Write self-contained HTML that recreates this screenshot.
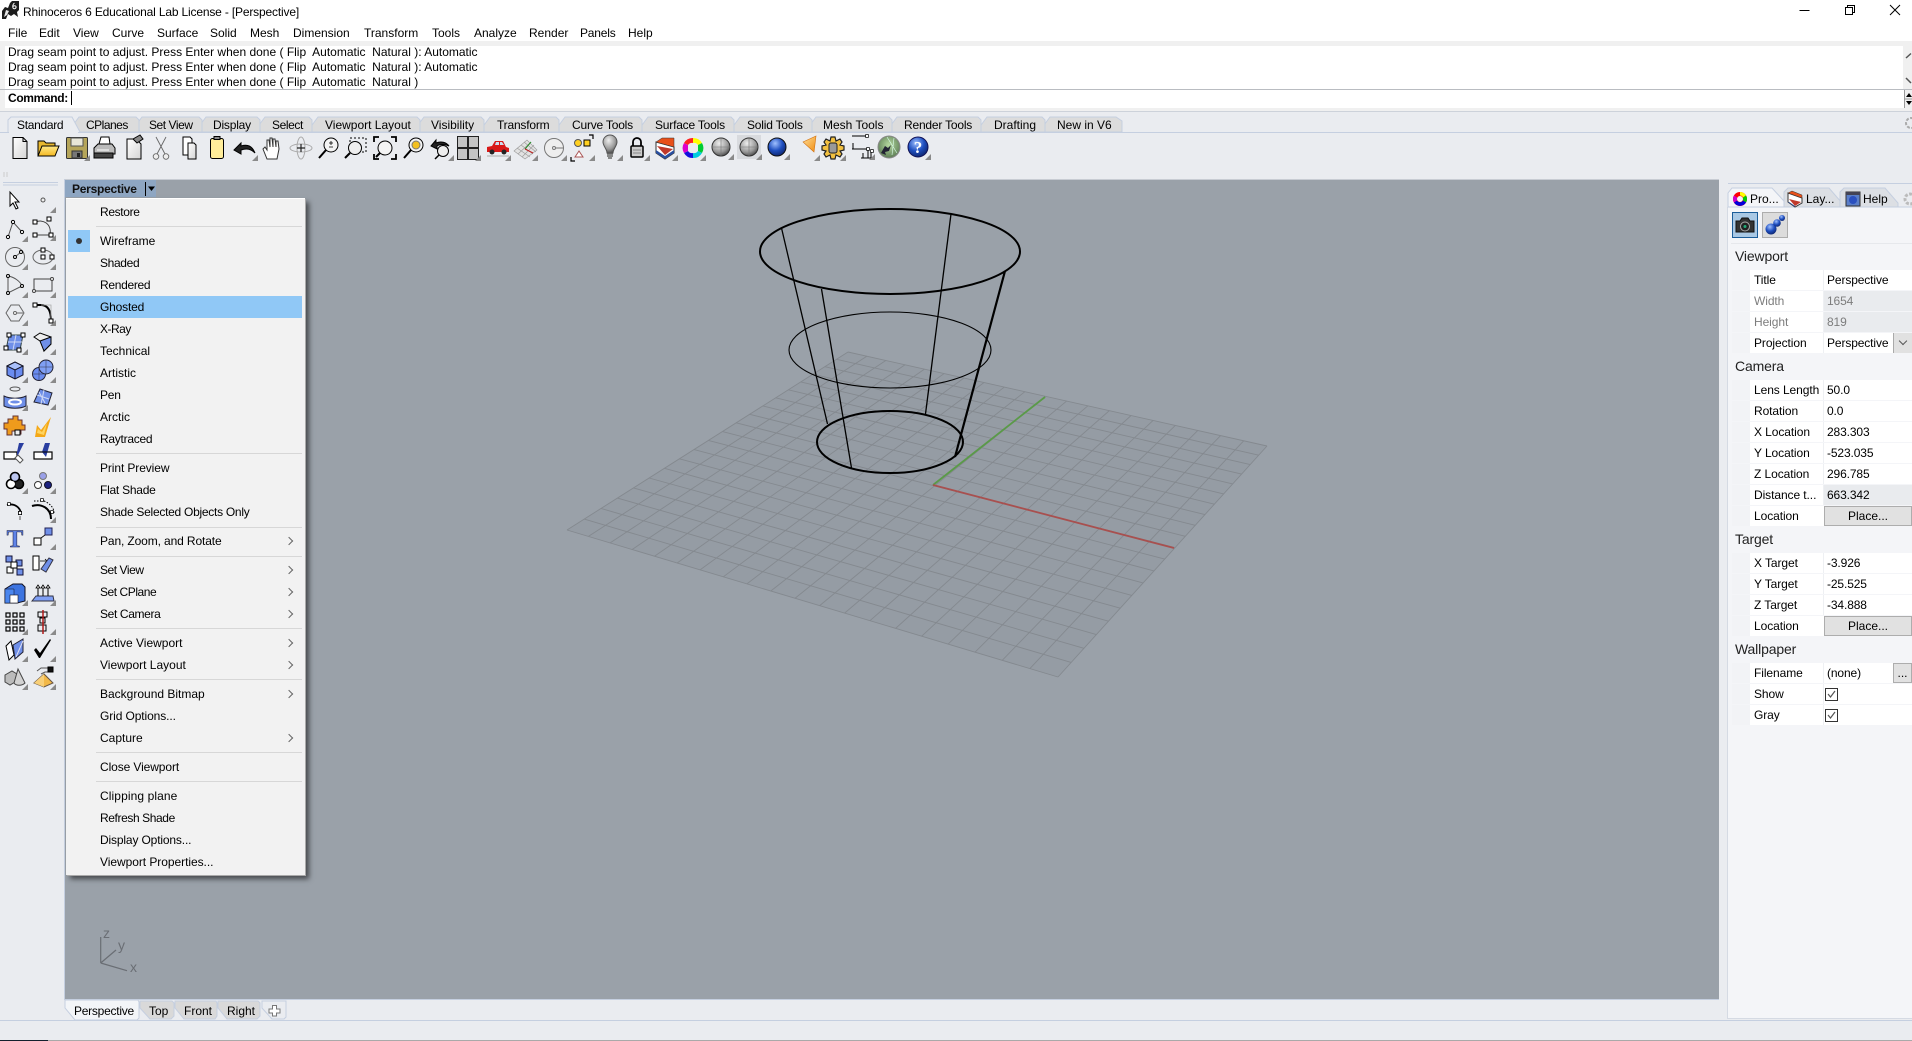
<!DOCTYPE html>
<html><head><meta charset="utf-8"><title>Rhinoceros 6</title>
<style>
html,body{margin:0;padding:0;width:1912px;height:1041px;overflow:hidden;background:#eaecf0;font:12px/16px "Liberation Sans",sans-serif;color:#000}
.b,.t{position:absolute}
.t{white-space:pre;height:16px}
.s{color:#1a1a1a}
.tb{top:117px;letter-spacing:-.2px}
#menu{position:absolute;left:66px;top:198px;width:239px;height:677px;background:#f2f2f2;box-shadow:inset 0 1px 0 #fff,1px 1px 0 #aaa,4px 4px 5px rgba(0,0,0,.55);box-sizing:border-box}
#menu .m{position:absolute;left:34px;white-space:pre;line-height:16px}
#menu hr{position:absolute;left:30px;width:206px;height:1px;margin:0;border:0;background:#d7d7d7}
#menu .a{position:absolute;left:220px;width:5px;height:5px;border-top:1px solid #666;border-right:1px solid #666;transform:rotate(45deg)}
.r{position:absolute;left:1732px;width:180px;height:20px;background:#fff}
.r i{position:absolute;left:0;top:0;width:18px;height:20px;background:#f2f3f6}
.r b{position:absolute;left:22px;top:2px;font-weight:normal;white-space:pre;letter-spacing:-.08px}
.r u{position:absolute;left:91px;top:0;width:89px;height:20px;text-decoration:none;white-space:pre;line-height:20px;padding-left:3px;box-sizing:border-box;border-left:1px solid #eef0f3;letter-spacing:-.12px}
.g{color:#7d7d7d}.gb{background:#e9ebee}
.h2{position:absolute;left:1735px;font-size:14px;line-height:18px;color:#222;letter-spacing:-.15px}
.btn{position:absolute;left:92px;top:0;width:88px;height:20px;box-sizing:border-box;background:#e1e1e1;border:1px solid #adadad;text-align:center;line-height:18px}
.chk{position:absolute;left:93px;top:4px;width:13px;height:13px;box-sizing:border-box;border:1px solid #333;background:#fff}
</style></head><body>

<!-- chrome backgrounds -->
<div class="b" style="left:0;top:0;width:1912px;height:41px;background:#fff"></div>
<div class="b" style="left:0;top:41px;width:1912px;height:5px;background:#f0f0f0"></div>
<div class="b" style="left:5px;top:46px;width:1898px;height:43px;background:#fff"></div>
<div class="b" style="left:0;top:46px;width:5px;height:62px;background:#f0f0f0"></div>
<div class="b" style="left:1903px;top:46px;width:9px;height:43px;background:#f0f0f0"></div>
<div class="b" style="left:0;top:89px;width:1912px;height:1px;background:#b9bcc1"></div>
<div class="b" style="left:5px;top:90px;width:1899px;height:18px;background:#fff"></div>
<div class="b" style="left:1904px;top:90px;width:8px;height:18px;background:#f0f0f0;border-left:1px solid #999"></div>
<div class="b" style="left:0;top:108px;width:1912px;height:3px;background:#f0f0f0"></div>
<div class="b" style="left:0;top:111px;width:1912px;height:1px;background:#cdd2da"></div>
<div class="b" style="left:0;top:132px;width:1912px;height:1px;background:#c5cfe0"></div>
<!-- viewport -->
<div class="b" style="left:64px;top:179px;width:1px;height:821px;background:#c5cfe0"></div>
<div class="b" style="left:65px;top:179px;width:1654px;height:1px;background:#c8ccd3"></div>
<div class="b" style="left:65px;top:180px;width:1654px;height:819px;background:#9aa1a9"></div>
<div class="b" style="left:65px;top:999px;width:1654px;height:1px;background:#c5cfe0"></div>
<div class="b" style="left:0;top:1020px;width:1912px;height:1px;background:#c5cfe0"></div>
<div class="b" style="left:0;top:1040px;width:48px;height:1px;background:#14202e"></div>
<div class="b" style="left:48px;top:1040px;width:1864px;height:1px;background:#a9a9a9"></div>
<!-- right panel -->
<div class="b" style="left:1728px;top:183px;width:184px;height:1px;background:#c5cfe0"></div>
<div class="b" style="left:1728px;top:207px;width:184px;height:811px;background:#f4f5f8"></div>
<div class="b" style="left:1727px;top:207px;width:1px;height:812px;background:#d5dae3"></div>
<div class="b" style="left:1728px;top:1018px;width:184px;height:1px;background:#d5dae3"></div>
<div class="b" style="left:1732px;top:212px;width:26px;height:26px;box-sizing:border-box;background:#a9c8e4;border:1px solid #1b5c98"></div>
<div class="b" style="left:1762px;top:212px;width:26px;height:26px;box-sizing:border-box;background:#dcdcdc;border:1px solid #adadad"></div>
<div class="b" style="left:1731px;top:243px;width:181px;height:1px;background:#e6e8ec"></div>
<!-- perspective label -->
<div class="b" style="left:65px;top:180px;width:91px;height:17px;background:#8ea6c2"></div>
<div class="b" style="left:145px;top:182px;width:1px;height:14px;background:#000"></div>

<svg class="b" style="left:0;top:0" width="1912" height="1041" viewBox="0 0 1912 1041" xmlns="http://www.w3.org/2000/svg">
<defs>
<linearGradient id="gp" x1="0" y1="0" x2="1" y2="1"><stop offset="0" stop-color="#fff"/><stop offset="1" stop-color="#d4d4d4"/></linearGradient>
<linearGradient id="gy" x1="0" y1="0" x2="0" y2="1"><stop offset="0" stop-color="#ffe98a"/><stop offset="1" stop-color="#f5b820"/></linearGradient>
<linearGradient id="go" x1="0" y1="0" x2="1" y2="1"><stop offset="0" stop-color="#ffdf9a"/><stop offset="1" stop-color="#f08c10"/></linearGradient>
<radialGradient id="gs" cx=".4" cy=".3" r=".8"><stop offset="0" stop-color="#eee"/><stop offset=".6" stop-color="#999"/><stop offset="1" stop-color="#333"/></radialGradient>
<radialGradient id="gb" cx=".4" cy=".3" r=".8"><stop offset="0" stop-color="#9fc0ff"/><stop offset=".5" stop-color="#1f4fc0"/><stop offset="1" stop-color="#0a1c5c"/></radialGradient>
<radialGradient id="gg" cx=".5" cy=".4" r=".7"><stop offset="0" stop-color="#b5d8a0"/><stop offset="1" stop-color="#4e6e48"/></radialGradient>
<path id="t" d="M13 7V13H7Z" fill="#8a8a8a"/>
<rect id="n" x="-2" y="-2" width="4" height="4" fill="#fff" stroke="#000"/>
</defs>

<!-- top tabs -->
<g fill="#dcdcdc" stroke="#c5cfe0">
<path d="M1039 132L1050 117H1116L1122 121V132Z"/>
<path d="M976 132L987 117H1042L1045 120V132Z"/>
<path d="M886 132L897 117H978L981 120V132Z"/>
<path d="M805 132L816 117H889L892 120V132Z"/>
<path d="M729 132L740 117H809L812 120V132Z"/>
<path d="M637 132L648 117H731L734 120V132Z"/>
<path d="M554 132L565 117H639L642 120V132Z"/>
<path d="M479 132L490 117H556L559 120V132Z"/>
<path d="M413 132L424 117H481L484 120V132Z"/>
<path d="M307 132L318 117H417L420 120V132Z"/>
<path d="M254 132L265 117H309L312 120V132Z"/>
<path d="M195 132L206 117H257L260 120V132Z"/>
<path d="M131 132L142 117H199L202 120V132Z"/>
<path d="M68 132L79 117H136L139 120V132Z"/>
</g>
<path d="M8 132V120L11 117H72L80 132" fill="#eaecf0" stroke="#c5cfe0"/>
<path d="M9 132H78" stroke="#eaecf0" stroke-width="2"/>

<!-- window controls -->
<path d="M1799.500 10.500H1809.500" stroke="#000"/>
<path d="M1845.500 7.500H1852.500V14.500H1845.500ZM1847.500 7.500V5.500H1854.500V12.500H1852.500" fill="none" stroke="#000"/>
<path d="M1890 5L1900 15M1900 5L1890 15" stroke="#000"/>
<path d="M1906 58L1911 53.500M1906 78L1911 83" stroke="#555" stroke-width="1.500" fill="none"/>
<path d="M1909 93L1906 97H1912ZM1909 105L1906 101H1912Z" fill="#000"/>
<path d="M1905 99H1912" stroke="#999"/>
<circle cx="1911" cy="123" r="5" fill="none" stroke="#aaa" stroke-width="2" stroke-dasharray="3 1.500"/>

<!-- app icon -->
<path d="M2 19L2 11L5 7L8 8L10 3L12 1H19V10L17 12L18 17L14 14L11 16L8 14L6 19Z" fill="#1c1c1c"/>
<path d="M4 17L6 10L9 11L7 15Z" fill="#e8e8e8"/>
<path d="M14.500 3C13 4 12.500 6 13 8C14 9.500 16.500 8.500 16 6.500C15.500 5.500 14 5.500 13.200 6.500" fill="none" stroke="#fff"/>

<!-- ===== viewport content ===== -->
<g id="grid"><path d="M567 530L848 352L1267 446L1058 677Z" fill="#959ca4"/></g>
<path d="M933 485L1045 397" stroke="#5a9a48" stroke-width="1.800"/>
<path d="M933 485L1174 548" stroke="#a8504f" stroke-width="1.800"/>
<g fill="none" stroke="#000">
<ellipse cx="890" cy="251.500" rx="130" ry="42.500" stroke-width="2"/>
<ellipse cx="890" cy="350" rx="101" ry="38" stroke-width="1.100"/>
<ellipse cx="890" cy="442" rx="73" ry="31" stroke-width="2"/>
<path d="M781.500 228L827.500 424" stroke-width="1.300"/>
<path d="M821.500 289L851.500 468" stroke-width="1.300"/>
<path d="M951 214L925.500 414" stroke-width="1.300"/>
<path d="M1005 271L955 457" stroke-width="2.200"/>
</g>
<!-- axis widget -->
<g stroke="#6a6e74" stroke-width="1.200" fill="none"><path d="M100.700 963V937M100.700 963L116 950M100.700 963L127 970.700"/></g>
<g font-family="Liberation Sans" font-size="14" fill="#6a6e74"><text x="103" y="938">z</text><text x="118" y="950">y</text><text x="130" y="972">x</text></g>
<path d="M148 186.500L155 186.500L151.500 191Z" fill="#000"/>

<!-- bottom tabs -->
<path d="M65 1000V1008L75 1020H137L139 1018V1002L138 1000Z" fill="#f3f5f8" stroke="#c5cfe0"/>
<g fill="#d9d9d9" stroke="#c5cfe0">
<path d="M140 1001H172L174 1003V1016L171 1019H150L140 1008Z"/>
<path d="M175 1001H216L217 1003V1016L215 1019H184L175 1008Z"/>
<path d="M218 1001H258L260 1003V1016L257 1019H227L218 1008Z"/>
</g>
<path d="M262 1001H286V1017L284 1019H272L262 1008Z" fill="#eaecf0" stroke="#c5cfe0"/>
<path d="M272.500 1006.500H276.500V1010H280V1014H276.500V1017H272.500V1014H269V1010H272.500Z" transform="translate(0,-1)" fill="#fff" stroke="#777"/>

<!-- panel tabs -->
<path d="M1728 207V193L1732 188H1772L1783 200L1788 207Z" fill="#f4f5f8" stroke="#c5cfe0"/>
<path d="M1784 207L1784 192L1788 188H1829L1842 203V207Z" fill="#dcdfe4" stroke="#c5cfe0"/>
<path d="M1840 207V192L1844 188H1885L1898 203V207Z" fill="#dcdfe4" stroke="#c5cfe0"/>
<path d="M1728 207H1912" stroke="#c5cfe0"/>
<g transform="translate(1740,199)"><circle r="5" fill="none" stroke="#f00" stroke-width="4"/><path d="M0-7A7 7 0 0 1 6-3.500L3-1.500A3.500 3.500 0 0 0 0-3.500Z" fill="#ff0"/><path d="M6-3.500A7 7 0 0 1 6 3.500L3 1.500V-1.500Z" fill="#0c0"/><path d="M6 3.500A7 7 0 0 1-6 3.500L-3 1.500A3.500 3.500 0 0 0 3 1.500Z" fill="#00d"/><path d="M-6 3.500A7 7 0 0 1-6-3.500L-3-1.500V1.500Z" fill="#c0c"/></g>
<g transform="translate(1795,199)"><path d="M-7-6L7-1V4L0 8L-7 3Z" fill="#fff" stroke="#333"/><path d="M-7-6L7-1V-4L-3-8Z" fill="#e8501a" stroke="#333" stroke-width=".5"/><path d="M-6 0L6 3L0 7Z" fill="#c0392b"/><path d="M-6 3L0 7V8L-7 3Z" fill="#2a4fa0"/></g>
<g transform="translate(1853,199)"><rect x="-7" y="-7" width="14" height="14" fill="#5a7ec8" stroke="#333"/><rect x="-7" y="-7" width="14" height="3" fill="#445"/><circle cy="1" r="4" fill="#2a50c0"/></g>
<circle cx="1910" cy="199" r="5" fill="none" stroke="#bbb" stroke-width="3" stroke-dasharray="3 1.500"/>
<!-- camera -->
<g transform="translate(1745,225)"><path d="M-9-4H-5L-3-7H3L5-4H9V7H-9Z" fill="#333" stroke="#111"/><circle r="4.500" cy="1.500" fill="#222" stroke="#aaa"/><circle r="1.500" cy="1.500" fill="#2a7"/></g>
<g transform="translate(1775,225)"><circle cx="-4" cy="4" r="5.500" fill="url(#gb)"/><circle cx="2" cy="-2" r="3.800" fill="url(#gb)"/><circle cx="7" cy="-7" r="3" fill="url(#gb)"/></g>

<!-- ===== top toolbar icons ===== -->
<g stroke="#000" stroke-width="1" fill="none">
<g transform="translate(20,148)"><path d="M-7-10.500H3L7-6.500V10.500H-7Z" fill="url(#gp)"/><path d="M3-10.500V-6.500H7"/></g>
<g transform="translate(48,148)"><path d="M-10 8V-7H-4L-2-5H7V-2" fill="#e8b830"/><path d="M-10 8L-6-2H11L7 8Z" fill="url(#gy)"/></g>
<g transform="translate(77,148)"><rect x="-10.500" y="-10.500" width="21" height="21" rx="1" fill="#b5a55a" stroke="#333"/><rect x="-6" y="-10" width="12" height="8" fill="#e8e6d8" stroke="#555"/><rect x="-5" y="3" width="10" height="7" fill="#777" stroke="#333"/><rect x="0" y="5" width="3" height="4" fill="#222" stroke="none"/><use href="#t" stroke="none"/></g>
<g transform="translate(104,148)"><path d="M-5-4L-3-11H5L6-4Z" fill="#fff"/><path d="M-10 0L-6-4H8L11 0V6H-10Z" fill="#bbb"/><rect x="-10" y="5" width="19" height="5" fill="#444"/><path d="M-7 2H5" stroke="#fff"/></g>
<g transform="translate(134,148)"><path d="M-7-9H2L7-4V11H-7Z" fill="url(#gp)"/><path d="M-1-9L6-13L9-9L3-5Z" fill="#888"/></g>
<g transform="translate(161,148)" stroke="#666" stroke-width=".9"><path d="M-5-11L4 6M5-11L-4 6"/><circle cx="-5" cy="8.500" r="2.800" fill="#eee"/><circle cx="5" cy="8.500" r="2.800" fill="#eee"/></g>
<g transform="translate(189,148)"><path d="M-6-11H1L3-9V7H-6Z" fill="#fff"/><path d="M-1-5H5L7-3V11H-1Z" fill="url(#gp)"/></g>
<g transform="translate(217,148)"><rect x="-6.500" y="-9.500" width="13" height="20" rx="2" fill="#ffed9a"/><rect x="-3" y="-11.500" width="6" height="3" fill="#888"/></g>
<g transform="translate(245,148)"><path d="M-11 2L-4-5V-2C3-4 7-2 10 5C6 1 2 0-4 2V6Z" fill="#222"/><use href="#t" stroke="none"/></g>
<g transform="translate(272,148)" stroke="#333"><path d="M-5 11L-9 1L-7-1L-5 2V-8L-3-8L-2-1V-10L0-10L1-1V-9L3-9L4-1V-7L6-7L7 1L5 11Z" fill="#fff"/></g>
<g transform="translate(301,148)"><ellipse rx="11" ry="4" stroke="#aaa"/><ellipse rx="4" ry="11" stroke="#aaa"/><path d="M-4 0H4M0-4V4" stroke="#222" stroke-width="1.200"/></g>
<g transform="translate(329,148)"><circle cx="2" cy="-3" r="7" fill="#f4f4f4"/><path d="M-3 2L-10 10" stroke-width="2"/><path d="M0-5H4M2-7V-3M0-1H4" stroke-width=".8"/></g>
<g transform="translate(356,148)"><rect x="-6" y="-10" width="16" height="14" stroke-dasharray="2 2"/><circle cx="-1" cy="0" r="6.500" fill="#eee"/><path d="M-6 5L-11 10" stroke-width="2"/></g>
<g transform="translate(385,148)"><circle r="7" fill="#f4f4f4"/><path d="M-5 5L-9 9" stroke-width="2"/><path d="M-11-6V-11H-6M6-11H11V-6M11 6V11H6M-6 11H-11V6" stroke-width="1.800"/></g>
<g transform="translate(414,148)"><circle cx="2" cy="-3" r="7" fill="#f4f4f4"/><circle cx="2" cy="-3" r="4" fill="#f3c020" stroke="#777"/><path d="M-3 2L-10 10" stroke-width="2"/></g>
<g transform="translate(441,148)"><path d="M-10-2L-5-8V-5C0-7 5-6 8-2C4-4-1-4-4-2V1Z" fill="#222"/><circle cx="2" cy="3" r="5.500" fill="#eee"/><path d="M-2 7L-6 11" stroke-width="1.500"/><use href="#t" stroke="none"/></g>
<g transform="translate(468,148)"><rect x="-10.500" y="-11.500" width="21" height="23" fill="#c4c4c4" stroke="#222"/><path d="M0-11V11M-10 0H10" stroke-width="2" stroke="#222"/><use href="#t" stroke="none"/></g>
<g transform="translate(498,148)" stroke="none"><path d="M-11 2V-1L-6-2L-3-7H5L8-1L11 0V4H-11Z" fill="#d81818"/><path d="M-2-6H1V-3H-3ZM2-6H4L6-3H2Z" fill="#cde"/><circle cx="-6" cy="4" r="2.500" fill="#222"/><circle cx="6" cy="4" r="2.500" fill="#222"/><path d="M-11 8H11" stroke="#aaa"/><use href="#t"/></g>
<g transform="translate(525,148)" stroke="#999" stroke-width=".6"><path d="M-11 3L2-8L12 2L0 11Z" fill="#e2e2e2"/><path d="M-8 0L5 9M-4-3L8 6M-1-6L11 4M-7 6L6-6M-3 9L9-3"/><path d="M0 1L6-6" stroke="#2a8a2a" stroke-width="1"/><path d="M0 1L8 5" stroke="#c02020" stroke-width="1"/><use href="#t" stroke="none"/></g>
<g transform="translate(554,148)" stroke="#777"><circle r="9.500" fill="#eee"/><circle r="1.500"/><path d="M1.500 0H9"/><use href="#t" stroke="none"/></g>
<g transform="translate(582,148)"><circle cx="-4" cy="-5" r="3.500" fill="#ffd020" stroke="#555"/><rect x="2" y="-8" width="6" height="6" fill="#ffd020"/><path d="M-3 3L1 9H-7Z" fill="#fff" stroke="#a55"/><path d="M7-13H11V-9M-11 9V13H-7" stroke-width="1.200"/><use href="#t" stroke="none"/></g>
<g transform="translate(610,148)" stroke="#555"><path d="M-3 5C-3 1-7-2-7-6A7 7 0 0 1 7-6C7-2 3 1 3 5Z" fill="url(#gs)"/><path d="M-3 6H3M-3 8H3M-2 10H2" stroke="#666" stroke-width="1.500"/><use href="#t" stroke="none"/></g>
<g transform="translate(637,148)"><rect x="-6" y="-2" width="12" height="11" rx="1" fill="#ccc" stroke-width="1.500"/><path d="M-4-2V-6A4 4 0 0 1 4-6V-2" stroke-width="1.800"/><path d="M-4 2H4M-4 5H4" stroke="#888"/><use href="#t" stroke="none"/></g>
<g transform="translate(665,148)"><path d="M-9-6L9-1V5L0 11L-9 5Z" fill="#fff" stroke="#333"/><path d="M-9-6L9-1V-10L-3-10Z" fill="#e8501a" stroke="#333" stroke-width=".5"/><path d="M-8-2L8 1L0 7Z" fill="#c0392b" stroke="none"/><path d="M-9 2L0 8L9 2V5L0 11L-9 5Z" fill="#2a4fa0" stroke="none"/><use href="#t" stroke="none"/></g>
<g transform="translate(693,148)" stroke="none"><path d="M0-10A10 10 0 0 1 9-5L5-3A5 5 0 0 0 0-5Z" fill="#ff0"/><path d="M9-5A10 10 0 0 1 9 5L5 3V-3Z" fill="#0c3"/><path d="M9 5A10 10 0 0 1 0 10V5A5 5 0 0 0 5 3Z" fill="#0cd"/><path d="M0 10A10 10 0 0 1-9 5L-5 3A5 5 0 0 0 0 5Z" fill="#11d"/><path d="M-9 5A10 10 0 0 1-9-5L-5-3V3Z" fill="#d0c"/><path d="M-9-5A10 10 0 0 1 0-10V-5A5 5 0 0 0-5-3Z" fill="#f22"/><use href="#t"/></g>
<g transform="translate(721,147)"><circle r="9" fill="url(#gs)" stroke="#333"/><path d="M-9 0H9M0-9V9" stroke="#777" stroke-width=".6"/><use href="#t" stroke="none"/></g>
<g transform="translate(749,147)"><rect x="-12" y="-12" width="24" height="24" fill="#d8dade" stroke="none"/><circle r="9" fill="url(#gs)" stroke="#333"/><path d="M-9 0H9M0-9V9" stroke="#777" stroke-width=".6"/><use href="#t" stroke="none"/></g>
<g transform="translate(777,147)"><circle r="9" fill="url(#gb)" stroke="#111"/><use href="#t" stroke="none"/></g>
<g transform="translate(809,146)"><path d="M-6-4L7-10L5 6Z" fill="url(#go)" stroke="#d07010" stroke-width=".6"/><use href="#t" stroke="none" transform="translate(-2,2)"/></g>
<g transform="translate(833,148)"><path d="M-2-11H2L3-7L7-9L9-6L7-3L11-2V2L7 3L9 6L7 9L3 7L2 11H-2L-3 7L-7 9L-9 6L-7 3L-11 2V-2L-7-3L-9-6L-7-9L-3-7Z" fill="#f2c040" stroke="#222" stroke-width="1.200"/><rect x="-4" y="-5" width="8" height="10" rx="2" fill="#999" stroke="#222"/><use href="#t" stroke="none"/></g>
<g transform="translate(862,147)" stroke-width="1"><path d="M-10-11H4M-9-4V2M-10 2H6M6 2V11M-1 11H1M1 6V11H9V4" /><use href="#n" transform="translate(5,-11) scale(.7)"/><use href="#n" transform="translate(6,2) scale(.7)"/><use href="#n" transform="translate(10,4) scale(.7)"/><use href="#t" stroke="none"/></g>
<g transform="translate(889,147)"><circle r="11" fill="url(#gg)" stroke="#888"/><path d="M-8 6L-4-1L-1 1L2-2L0 4L-4 5L-3 8Z" fill="#223" stroke="none"/><path d="M-2-10L8 6M5-9L3 8" stroke="#dfe" stroke-width=".6"/></g>
<g transform="translate(918,147)"><circle r="10" fill="url(#gb)" stroke="#115"/><text x="0" y="6" text-anchor="middle" font-family="Liberation Serif" font-weight="bold" font-size="17" fill="#fff" stroke="none">?</text><use href="#t" stroke="none"/></g>

<!-- ===== left toolbar ===== -->
<path d="M3 182.500H58M3 185H58" stroke="#c5cfe0" stroke-width="1"/>
<path d="M4 172V177M7 172V177" stroke="#ccc"/>
<g transform="translate(15,200)"><path d="M-5-8V6L-2 3L1 9L3 8L0 2H4Z" fill="#fff"/></g>
<g transform="translate(43,200)"><circle r="2" fill="#eee" stroke="#555"/><use href="#t" stroke="none"/></g>
<g transform="translate(15,229)" stroke="#555"><path d="M-7 8L-2-7L7 3"/><g fill="#fff" stroke="#000"><circle cx="-7" cy="8" r="1.600"/><circle cx="-2" cy="-7" r="1.600"/><circle cx="7" cy="3" r="1.600"/></g><use href="#t" stroke="none"/></g>
<g transform="translate(43,228)" stroke="#444"><path d="M-7-6C-1-9 9-5 7 7H-7"/><use href="#n" transform="translate(-8,-6)"/><use href="#n" transform="translate(6,-9)"/><use href="#n" transform="translate(-8,7)"/><use href="#n" transform="translate(8,7)"/><use href="#t" stroke="none"/></g>
<g transform="translate(15,257)" stroke="#666"><circle r="9.500"/><path d="M0 0L6-5"/><circle r="1.500" fill="#fff" stroke="#000"/><circle cx="6" cy="-5" r="1.500" fill="#fff" stroke="#000"/><use href="#t" stroke="none"/></g>
<g transform="translate(43,257)" stroke="#666"><ellipse rx="10" ry="7"/><use href="#n" transform="translate(0,-7)"/><use href="#n"/><use href="#n" transform="translate(9,0)"/><use href="#t" stroke="none"/></g>
<g transform="translate(15,285)" stroke="#555"><path d="M-7 8V-9C-1-8 5-4 7 1Z"/><g fill="#fff" stroke="#000"><circle cx="-7" cy="8" r="1.500"/><circle cx="-7" cy="-9" r="1.500"/><circle cx="7" cy="1" r="1.500"/></g><use href="#t" stroke="none"/></g>
<g transform="translate(43,285)" stroke="#444"><rect x="-9" y="-6" width="18" height="12"/><circle cx="-9" cy="6" r="1.500" fill="#fff"/><circle cx="9" cy="-6" r="1.500" fill="#fff"/><use href="#t" stroke="none"/></g>
<g transform="translate(15,313)" stroke="#666"><path d="M-4-8H4L9 0L4 8H-4L-9 0Z"/><circle r="1.500" fill="#fff"/><path d="M2 0H8"/><use href="#t" stroke="none"/></g>
<g transform="translate(43,313)"><path d="M-8-8H-2C4-8 8-4 8 8" stroke-width="2"/><path d="M-2-8H8V8" stroke="#aaa" stroke-width=".8"/><use href="#n" transform="translate(-8,-8)"/><use href="#n" transform="translate(8,8)"/><use href="#t" stroke="none"/></g>
<g transform="translate(15,342)"><path d="M-6-7H8L5 8H-9Z" fill="#6f8fe8" stroke="#344"/><path d="M1-7L-2 8M-7 0H7" stroke="#cfd9f5"/><use href="#n" transform="translate(-6,-7)"/><use href="#n" transform="translate(8,-7)"/><use href="#n" transform="translate(-9,6)"/><use href="#n" transform="translate(4,8)"/><use href="#t" stroke="none"/></g>
<g transform="translate(43,342)"><path d="M-9-5L-3-9L8-5L8 2L1 9L0 1Z" fill="#eee"/><path d="M-3-1L8-5V2L1 9Z" fill="#6f8fe8"/><use href="#t" stroke="none"/></g>
<g transform="translate(15,370)"><path d="M-8-4L0-8L8-4V5L0 9L-8 5Z" fill="#6a8cf0" stroke="#112"/><path d="M-8-4L0 0L8-4L0-8Z" fill="#a9c0fa" stroke="#112"/><path d="M0 0V9" stroke="#113"/><use href="#t" stroke="none"/></g>
<g transform="translate(43,370)"><circle cx="-4" cy="4" r="6.500" fill="#6a8cf0" stroke="#223"/><circle cx="3" cy="-3" r="7" fill="#7f9ff4" stroke="#223"/><path d="M-4-2V10M-10 4H2M3-10V4M-4-3H10" stroke="#334" stroke-width=".5"/><use href="#t" stroke="none"/></g>
<g transform="translate(15,398)"><ellipse cy="-9" rx="5" ry="2" stroke="#555"/><path d="M-11-2C-5 1 5 1 11-2V8C5 11-5 11-11 8Z" fill="#6f8fe8" stroke="#223"/><ellipse cy="4" rx="6" ry="2.500" fill="none" stroke="#fff" stroke-width="2"/><use href="#t" stroke="none"/></g>
<g transform="translate(43,397)" stroke="#223"><path d="M-9 5L-3-8L9-4L5 8Z" fill="#6f8fe8"/><path d="M-6-2L6 2M-4-5L2 6M1-7L-2 7" stroke="#cfd9f5"/><use href="#t" stroke="none"/></g>
<g transform="translate(15,426)"><path d="M-7-7H-2V-10H3V-6H7V-1H10V4H6V8H1V5H-3V9H-8V3H-11V-3H-7Z" fill="#ef9b1c" stroke="#633"/><path d="M0 4H5V9H0Z" fill="#eee"/></g>
<g transform="translate(43,427)" stroke="none"><path d="M-8 10L-6-2L-2 3L8-10L2 10Z" fill="#f4a818"/><path d="M-6 6L-5 2L-1 5L4-4L1 8Z" fill="#ffd460"/></g>
<g transform="translate(15,453)"><rect x="-11" y="-1" width="13" height="7" fill="#fff" stroke-width="1.200"/><path d="M2-1L4-10H9L2 4Z" fill="#2a3ea0" stroke="none"/><path d="M3 2L8 7L5 10L0 5Z" fill="#fff" stroke="#555"/></g>
<g transform="translate(43,453)"><rect x="-9" y="-1" width="18" height="7" fill="#fff" stroke-width="1.200"/><path d="M-1-1L2-10H7L3 4Z" fill="#2a3ea0" stroke="none"/><path d="M-9-1H9"/></g>
<g transform="translate(15,481)"><circle cx="-4" cy="3" r="4.500" fill="#fff" stroke-width="1.600"/><circle cx="4" cy="3" r="4.500" fill="#222" stroke-width="1.600"/><circle cx="0" cy="-4" r="4.500" fill="#bcc6f0" stroke-width="1.600"/><circle cx="-3" cy="3" r="3" fill="#fff" stroke="none"/><use href="#t" stroke="none"/></g>
<g transform="translate(43,481)"><circle cx="0" cy="-5" r="3.500" fill="#9aa0e8" stroke="#777"/><circle cx="-5" cy="4" r="3.500" fill="#fff" stroke="#333"/><circle cx="5" cy="4" r="3.500" fill="#1c2280" stroke="#112"/><use href="#t" stroke="none"/></g>
<g transform="translate(15,510)"><path d="M-8-5C-1-7 6-3 6 5" stroke-width="1.800"/><use href="#n" transform="translate(-6,-6) scale(.7)"/><use href="#n" transform="translate(5,3) scale(.8)"/><path d="M5 6V10" stroke="#555"/></g>
<g transform="translate(43,510)"><path d="M-11-4C-2-7 8-2 8 9" stroke-width="2"/><path d="M-9-9H2M1-9C6-7 11-3 11 3" stroke-dasharray="1.500 1.500"/><use href="#n" transform="translate(-1,-10) scale(.7)"/><use href="#n" transform="translate(9,2) scale(.7)"/><use href="#t" stroke="none"/></g>
<text x="15" y="547" text-anchor="middle" font-family="Liberation Serif" font-weight="bold" font-size="25" fill="#5f84e8" stroke="#113" stroke-width=".5">T</text>
<g transform="translate(43,537)"><rect x="-9" y="1" width="7" height="7" fill="#fff"/><rect x="2" y="-9" width="7" height="7" fill="#6f8fe8" stroke="#225"/><path d="M-2 1L2-2" stroke-width=".8"/><use href="#t" stroke="none"/></g>
<g transform="translate(15,565)"><rect x="-9" y="-9" width="6" height="6" fill="#6f8fe8" stroke="#113"/><rect x="1" y="-5" width="6" height="6" fill="#6f8fe8" stroke="#113"/><rect x="-8" y="2" width="6" height="6" fill="#fff"/><rect x="2" y="4" width="6" height="6" fill="#6f8fe8" stroke="#113"/><rect x="-4" y="-3" width="6" height="6" fill="#fff"/></g>
<g transform="translate(43,565)"><rect x="-10" y="-9" width="6" height="14" fill="#fff"/><path d="M-3-4L4-4M2-6L4-4L2-2" stroke-width=".8"/><path d="M3 7L10-5L6-7L-2 4Z" fill="#6f8fe8" stroke="#334"/></g>
<g transform="translate(15,593)"><path d="M-10-4L-2-9H7L10-6V8L2 10H-10Z" fill="#3d74e0" stroke="#112"/><path d="M-10-4H-1V6H2V10H-10Z" fill="#4a86ee" stroke="#112" stroke-width=".5"/><rect x="-5" y="2" width="8" height="8" fill="#fff" stroke="#112" stroke-width=".6"/><use href="#t" stroke="none"/></g>
<g transform="translate(43,593)"><path d="M-11 8L-7 3H10L11 8Z" fill="#7f9ff4" stroke="#334"/><path d="M-5 3V-7M0 3V-7M5 3V-7" stroke="#000"/><path d="M-7-5L-5-8L-3-5ZM-2-5L0-8L2-5ZM3-5L5-8L7-5Z" fill="#fff" stroke-width=".8"/><use href="#t" stroke="none"/></g>
<g transform="translate(15,622)" stroke-width="1.200"><g id="arr"><rect x="-9" y="-9" width="4" height="4"/><rect x="-2" y="-9" width="4" height="4"/><rect x="5" y="-9" width="4" height="4"/><rect x="-9" y="-2" width="4" height="4"/><rect x="-2" y="-2" width="4" height="4"/><rect x="5" y="-2" width="4" height="4"/><rect x="-9" y="5" width="4" height="4"/><rect x="-2" y="5" width="4" height="4"/><rect x="5" y="5" width="4" height="4"/></g><use href="#t" stroke="none"/></g>
<g transform="translate(43,622)"><rect x="-5" y="-10" width="9" height="5"/><rect x="-3" y="-4" width="5" height="5"/><rect x="-5" y="3" width="8" height="6"/><path d="M0-12V12" stroke="#b01818" stroke-width="1.500"/><use href="#t" stroke="none"/></g>
<g transform="translate(15,649)"><path d="M-9-3L-4-8L-1 6L-6 11Z" fill="#fff"/><path d="M-2-4L8-10V3L0 10Z" fill="#6f8fe8" stroke="#223"/><path d="M1 8L8-8" stroke="#dde"/><use href="#t" stroke="none"/></g>
<g transform="translate(43,649)" stroke="none"><path d="M-9 1L-7-1L-3 4L7-10L8-9L-3 9H-4Z" fill="#000"/><use href="#t"/></g>
<g transform="translate(15,677)"><path d="M-10-2L-3-6L2-3V4L-5 8L-10 5Z" fill="#bbb" stroke="#444"/><path d="M3-8L10 6C7 9 1 9-1 6Z" fill="#d2d2d2" stroke="#444"/><use href="#t" stroke="none"/></g>
<g transform="translate(43,677)"><path d="M-9 6L1-3L10 6L1 10Z" fill="#f2b848" stroke="#654"/><path d="M1-3L-9 6L1 10Z" fill="#f8cf78" stroke="none"/><path d="M-6-6L-2-9H8V-5H2L-2-3" stroke="#555"/><rect x="5" y="-10" width="5" height="5" fill="#111"/><use href="#t" stroke="none"/></g>
</g>
</svg>

<!-- title + menu bar -->
<span class="t" style="left:23px;top:4px;letter-spacing:-.17px">Rhinoceros 6 Educational Lab License - [Perspective]</span>
<span class="t" style="left:8px;top:25px">File</span>
<span class="t" style="left:39px;top:25px">Edit</span>
<span class="t" style="left:73px;top:25px">View</span>
<span class="t" style="left:112px;top:25px">Curve</span>
<span class="t" style="left:157px;top:25px">Surface</span>
<span class="t" style="left:210px;top:25px">Solid</span>
<span class="t" style="left:250px;top:25px">Mesh</span>
<span class="t" style="left:293px;top:25px">Dimension</span>
<span class="t" style="left:364px;top:25px">Transform</span>
<span class="t" style="left:432px;top:25px">Tools</span>
<span class="t" style="left:474px;top:25px">Analyze</span>
<span class="t" style="left:529px;top:25px">Render</span>
<span class="t" style="left:580px;top:25px;letter-spacing:-.2px">Panels</span>
<span class="t" style="left:628px;top:25px">Help</span>

<!-- command -->
<span class="t" style="left:8px;top:44px">Drag seam point to adjust. Press Enter when done ( Flip  Automatic  Natural ): Automatic</span>
<span class="t" style="left:8px;top:59px">Drag seam point to adjust. Press Enter when done ( Flip  Automatic  Natural ): Automatic</span>
<span class="t" style="left:8px;top:74px">Drag seam point to adjust. Press Enter when done ( Flip  Automatic  Natural )</span>
<span class="t" style="left:8px;top:90px;font-weight:bold;letter-spacing:-.35px">Command:</span>
<div class="b" style="left:71px;top:91px;width:1px;height:14px;background:#000"></div>

<!-- top tabs text -->
<span class="t tb" style="left:17px;letter-spacing:-.3px">Standard</span>
<span class="t tb" style="left:86px;letter-spacing:-.5px">CPlanes</span>
<span class="t tb" style="left:149px;letter-spacing:-.45px">Set View</span>
<span class="t tb" style="left:213px">Display</span>
<span class="t tb" style="left:272px;letter-spacing:-.4px">Select</span>
<span class="t tb" style="left:325px;letter-spacing:0">Viewport Layout</span>
<span class="t tb" style="left:431px;letter-spacing:0">Visibility</span>
<span class="t tb" style="left:497px">Transform</span>
<span class="t tb" style="left:572px">Curve Tools</span>
<span class="t tb" style="left:655px">Surface Tools</span>
<span class="t tb" style="left:747px">Solid Tools</span>
<span class="t tb" style="left:823px;letter-spacing:0">Mesh Tools</span>
<span class="t tb" style="left:904px">Render Tools</span>
<span class="t tb" style="left:994px;letter-spacing:0">Drafting</span>
<span class="t tb" style="left:1057px;letter-spacing:0">New in V6</span>

<span class="t" style="left:72px;top:181px;font-weight:bold;color:#111;letter-spacing:-.25px">Perspective</span>

<!-- bottom tabs text -->
<span class="t" style="left:74px;top:1003px;letter-spacing:-.25px">Perspective</span>
<span class="t" style="left:149px;top:1003px">Top</span>
<span class="t" style="left:184px;top:1003px">Front</span>
<span class="t" style="left:227px;top:1003px">Right</span>

<!-- panel tabs text -->
<span class="t" style="left:1750px;top:191px">Pro...</span>
<span class="t" style="left:1806px;top:191px">Lay...</span>
<span class="t" style="left:1863px;top:191px">Help</span>

<!-- properties -->
<div class="h2" style="top:247px">Viewport</div>
<div class="r" style="top:270px"><i></i><b>Title</b><u>Perspective</u></div>
<div class="r" style="top:291px"><i></i><b class="g">Width</b><u class="g gb">1654</u></div>
<div class="r" style="top:312px"><i></i><b class="g">Height</b><u class="g gb">819</u></div>
<div class="r" style="top:333px"><i></i><b>Projection</b><u>Perspective</u><div style="position:absolute;left:161px;top:0;width:19px;height:20px;background:#e1e1e1;border-left:1px solid #aaa;box-sizing:border-box"></div><div style="position:absolute;left:168px;top:5px;width:5px;height:5px;border-right:1px solid #555;border-bottom:1px solid #555;transform:rotate(45deg)"></div></div>
<div class="h2" style="top:357px">Camera</div>
<div class="r" style="top:380px"><i></i><b>Lens Length</b><u>50.0</u></div>
<div class="r" style="top:401px"><i></i><b>Rotation</b><u>0.0</u></div>
<div class="r" style="top:422px"><i></i><b>X Location</b><u>283.303</u></div>
<div class="r" style="top:443px"><i></i><b>Y Location</b><u>-523.035</u></div>
<div class="r" style="top:464px"><i></i><b>Z Location</b><u>296.785</u></div>
<div class="r" style="top:485px"><i></i><b>Distance t...</b><u class="gb">663.342</u></div>
<div class="r" style="top:506px"><i></i><b>Location</b><div class="btn">Place...</div></div>
<div class="h2" style="top:530px">Target</div>
<div class="r" style="top:553px"><i></i><b>X Target</b><u>-3.926</u></div>
<div class="r" style="top:574px"><i></i><b>Y Target</b><u>-25.525</u></div>
<div class="r" style="top:595px"><i></i><b>Z Target</b><u>-34.888</u></div>
<div class="r" style="top:616px"><i></i><b>Location</b><div class="btn">Place...</div></div>
<div class="h2" style="top:640px">Wallpaper</div>
<div class="r" style="top:663px"><i></i><b>Filename</b><u>(none)</u><div class="btn" style="left:161px;width:19px">...</div></div>
<div class="r" style="top:684px"><i></i><b>Show</b><u></u><div class="chk"><svg width="11" height="11" style="display:block" xmlns="http://www.w3.org/2000/svg"><path d="M2 5L4.500 8L9 2" fill="none" stroke="#555" stroke-width="1.200"/></svg></div></div>
<div class="r" style="top:705px"><i></i><b>Gray</b><u></u><div class="chk"><svg width="11" height="11" style="display:block" xmlns="http://www.w3.org/2000/svg"><path d="M2 5L4.500 8L9 2" fill="none" stroke="#555" stroke-width="1.200"/></svg></div></div>

<!-- context menu -->
<div id="menu">
<div class="b" style="left:2px;top:32px;width:22px;height:22px;background:#90c8f6"></div>
<div class="b" style="left:10px;top:40px;width:6px;height:6px;border-radius:50%;background:#333"></div>
<div class="b" style="left:2px;top:98px;width:234px;height:22px;background:#90c8f6"></div>
<span class="m" style="top:6px;letter-spacing:-.35px">Restore</span><hr style="top:28px">
<span class="m" style="top:35px">Wireframe</span>
<span class="m" style="top:57px;letter-spacing:-.35px">Shaded</span>
<span class="m" style="top:79px;letter-spacing:-.3px">Rendered</span>
<span class="m" style="top:101px;letter-spacing:-.17px">Ghosted</span>
<span class="m" style="top:123px;letter-spacing:-.5px">X-Ray</span>
<span class="m" style="top:145px">Technical</span>
<span class="m" style="top:167px">Artistic</span>
<span class="m" style="top:189px;letter-spacing:-.2px">Pen</span>
<span class="m" style="top:211px">Arctic</span>
<span class="m" style="top:233px;letter-spacing:-.27px">Raytraced</span><hr style="top:255px">
<span class="m" style="top:262px;letter-spacing:-.1px">Print Preview</span>
<span class="m" style="top:284px;letter-spacing:-.25px">Flat Shade</span>
<span class="m" style="top:306px;letter-spacing:-.27px">Shade Selected Objects Only</span><hr style="top:329px">
<span class="m" style="top:335px;letter-spacing:-.12px">Pan, Zoom, and Rotate</span><div class="a" style="top:340px"></div><hr style="top:358px">
<span class="m" style="top:364px;letter-spacing:-.45px">Set View</span><div class="a" style="top:369px"></div>
<span class="m" style="top:386px;letter-spacing:-.45px">Set CPlane</span><div class="a" style="top:391px"></div>
<span class="m" style="top:408px;letter-spacing:-.36px">Set Camera</span><div class="a" style="top:413px"></div><hr style="top:430px">
<span class="m" style="top:437px">Active Viewport</span><div class="a" style="top:442px"></div>
<span class="m" style="top:459px">Viewport Layout</span><div class="a" style="top:464px"></div><hr style="top:481px">
<span class="m" style="top:488px">Background Bitmap</span><div class="a" style="top:493px"></div>
<span class="m" style="top:510px;letter-spacing:-.1px">Grid Options...</span>
<span class="m" style="top:532px">Capture</span><div class="a" style="top:537px"></div><hr style="top:554px">
<span class="m" style="top:561px;letter-spacing:-.1px">Close Viewport</span><hr style="top:583px">
<span class="m" style="top:590px;letter-spacing:.1px">Clipping plane</span>
<span class="m" style="top:612px;letter-spacing:-.4px">Refresh Shade</span>
<span class="m" style="top:634px;letter-spacing:-.15px">Display Options...</span>
<span class="m" style="top:656px;letter-spacing:-.05px">Viewport Properties...</span>
</div>

<script>
(function(){
var p=[[567,530],[1058,677],[1267,446],[848,352]];
var x0=p[0][0],y0=p[0][1],x1=p[1][0],y1=p[1][1],x2=p[2][0],y2=p[2][1],x3=p[3][0],y3=p[3][1];
var dx1=x1-x2,dx2=x3-x2,sx=x0-x1+x2-x3,dy1=y1-y2,dy2=y3-y2,sy=y0-y1+y2-y3;
var D=dx1*dy2-dx2*dy1,g=(sx*dy2-dx2*sy)/D,h=(dx1*sy-sx*dy1)/D;
var a=x1-x0+g*x1,b=x3-x0+h*x3,d=y1-y0+g*y1,e=y3-y0+h*y3;
function P(u,v){var w=g*u+h*v+1;return [(a*u+b*v+x0)/w,(d*u+e*v+y0)/w];}
var G=document.getElementById('grid'),n=20;
for(var i=0;i<=n;i++){for(var k=0;k<2;k++){
var A=k?P(0,i/n):P(i/n,0),B=k?P(1,i/n):P(i/n,1);
var l=document.createElementNS('http://www.w3.org/2000/svg','line');
l.setAttribute('x1',A[0]);l.setAttribute('y1',A[1]);l.setAttribute('x2',B[0]);l.setAttribute('y2',B[1]);
l.setAttribute('stroke','#84898f');l.setAttribute('stroke-width','.9');
G.appendChild(l);
}}
})();
</script>
</body></html>
